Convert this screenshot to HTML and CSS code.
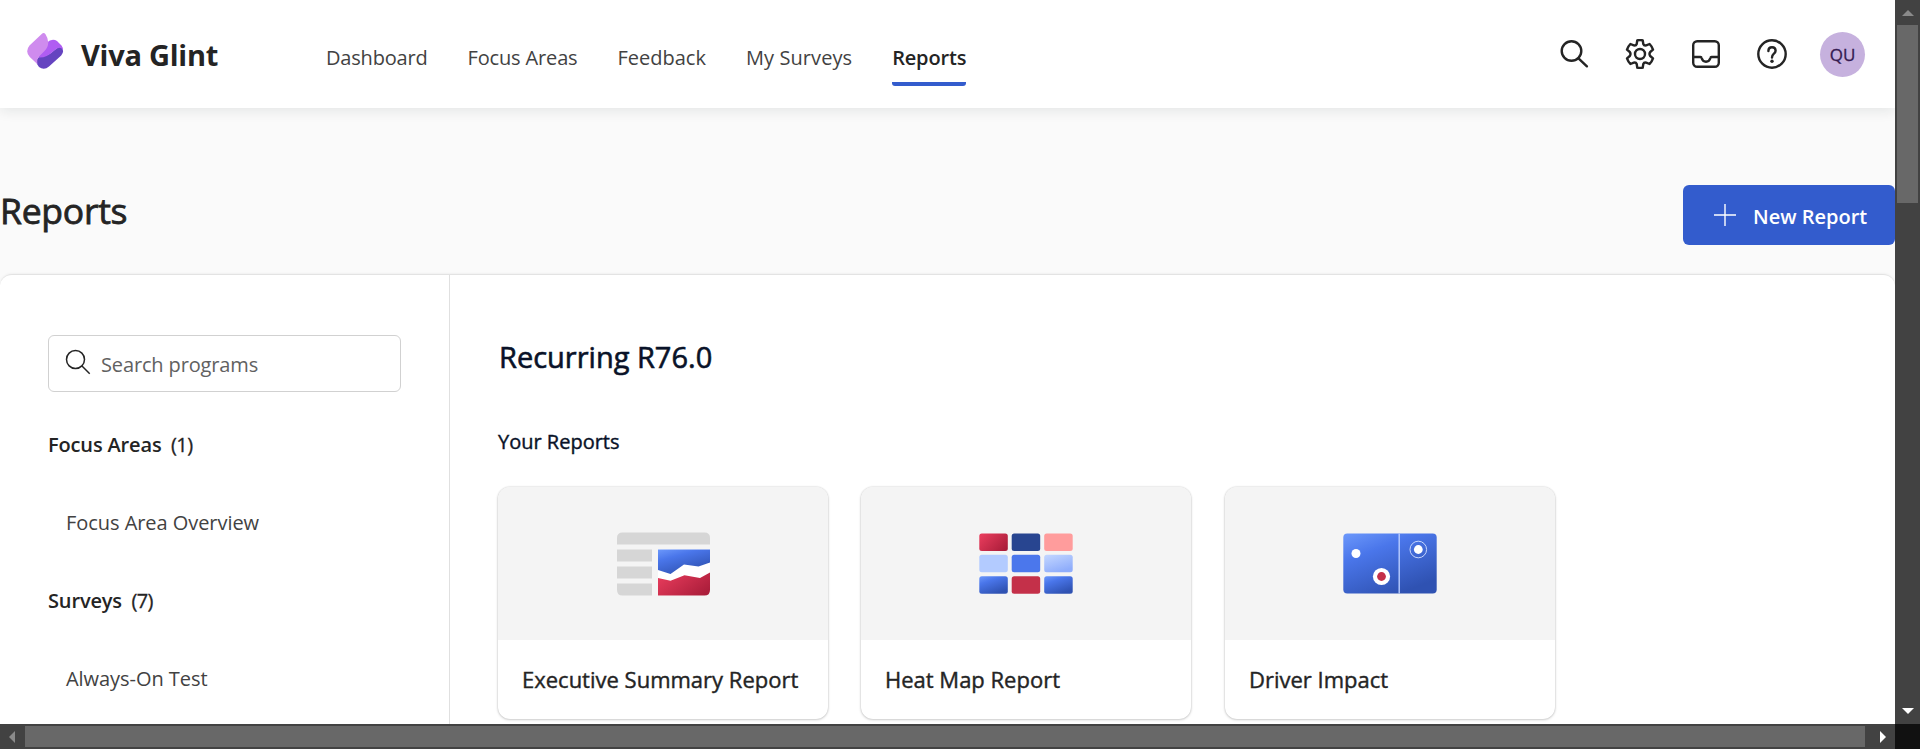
FILE: index.html
```html
<!DOCTYPE html>
<html lang="en">
<head>
<meta charset="utf-8">
<title>Viva Glint - Reports</title>
<link rel="stylesheet" href="styles.css">
</head>
<body>
<div class="window">
  <div class="page">
    <header class="topbar">
      <svg class="logo" width="38" height="38" viewBox="0 0 38 38">
        <path d="M13.500 24.500 Q22 24.500 28 18.500 Q33 14 35.500 15.300 Q38.800 19.500 35.200 23.500 L23 34.500 Q18 38.800 13 35 Q8.500 30 12 26Z" fill="#6544c0"/>
        <path d="M12 25.500 L20.500 11 Q26 5.500 31 9 L35.500 13.500 Q37 15.500 36.800 17.500 Q33.500 13.500 28 18.800 Q20 26.500 12 25.500Z" fill="#b05df2"/>
        <path d="M15.700 2 Q17.700 .1 19.500 2.200 Q25.500 11.500 18.500 19 L13 24.500 Q10.500 27 11.500 32.300 L3.800 25 Q-1.300 19.500 3.500 13.500Z" fill="#cf8bee"/>
      </svg>
      <span class="brand">Viva Glint</span>
      <nav class="nav">
        <a class="nav-link t-dash">Dashboard</a>
        <a class="nav-link t-focus">Focus Areas</a>
        <a class="nav-link">Feedback</a>
        <a class="nav-link t-my">My Surveys</a>
        <a class="nav-link active">Reports</a>
      </nav>
      <div class="tools">
        <svg width="30" height="30" viewBox="0 0 30 30" class="icon"><circle cx="12.500" cy="12" r="9.800"/><path d="M19.500 19.300 27.900 27.300"/></svg>
        <svg width="30" height="30" viewBox="0 0 30 30" class="icon"><circle cx="15" cy="15" r="5"/><path d="M12.300 1.300 Q15 .7 17.700 1.300 L18.300 5 Q19 6.900 21.200 6.400 L24.600 5 Q26.900 7.300 28 10.600 L25.200 13 Q23.800 15 25.200 17 L28 19.400 Q26.900 22.700 24.600 25 L21.200 23.600 Q19 23.100 18.300 25 L17.700 28.700 Q15 29.300 12.300 28.700 L11.700 25 Q11 23.100 8.800 23.600 L5.400 25 Q3.100 22.700 2 19.400 L4.800 17 Q6.200 15 4.800 13 L2 10.600 Q3.100 7.300 5.400 5 L8.800 6.400 Q11 6.900 11.700 5Z"/></svg>
        <svg width="30" height="30" viewBox="0 0 30 30" class="icon"><rect x="2.200" y="2.200" width="25.600" height="25.600" rx="4"/><path d="M2.200 18 H9.500 Q10.400 18 10.600 19 Q11.600 22.700 15 22.700 Q18.400 22.700 19.400 19 Q19.600 18 20.500 18 H27.800"/></svg>
        <svg width="30" height="30" viewBox="0 0 30 30" class="icon"><circle cx="15" cy="15" r="13.700"/><path d="M11.400 12 Q11.400 8.200 15 8.200 Q18.600 8.200 18.600 11.700 Q18.600 13.400 16.700 14.900 Q15 16.400 15 18.600"/><circle cx="15" cy="22.300" r="1.700" class="dot"/></svg>
        <span class="avatar">QU</span>
      </div>
    </header>
    <div class="titlebar">
      <h1 class="title">Reports</h1>
      <button class="new-report">
        <svg width="24" height="24" viewBox="0 0 24 24"><path d="M12 1V23M1 12H23" stroke="#fff" stroke-width="1.400"/></svg>
        <span class="new-label">New Report</span>
      </button>
    </div>
    <main class="panel">
      <aside class="sidebar">
        <div class="search">
          <svg width="26" height="26" viewBox="0 0 26 26"><circle cx="10.500" cy="10.500" r="9" /><path d="M17 17 24.700 24.700"/></svg>
          <span class="placeholder">Search programs</span>
        </div>
        <div class="group"><span class="group-name">Focus Areas</span><span class="count">(1)</span></div>
        <div class="item">Focus Area Overview</div>
        <div class="group"><span class="group-name">Surveys</span><span class="count">(7)</span></div>
        <div class="item">Always-On Test</div>
      </aside>
      <section class="content">
        <h2 class="program">Recurring R76.0</h2>
        <h3 class="subhead">Your Reports</h3>
        <div class="cards">
          <article class="card">
            <div class="thumb">
              <svg width="94" height="64" viewBox="0 0 94 64">
                <defs>
                  <linearGradient id="blue" x1="0" y1="0" x2=".6" y2="1"><stop offset="0" stop-color="#6c98fb"/><stop offset=".35" stop-color="#4a76ea"/><stop offset="1" stop-color="#2f52b2"/></linearGradient>
                  <linearGradient id="red" x1="0" y1=".2" x2="1" y2=".8"><stop offset="0" stop-color="#e63b5b"/><stop offset="1" stop-color="#aa1d3a"/></linearGradient>
                  <linearGradient id="pale" x1="0" y1="0" x2=".5" y2="1"><stop offset="0" stop-color="#c4d7ff"/><stop offset="1" stop-color="#8fadfb"/></linearGradient>
                </defs>
                <g fill="#d6d6d6"><path d="M1 12.500V6Q1 .500 6.500 .500H88.500Q94 .500 94 6V12.500Z"/><path d="M1 17.500H36V29.500H1ZM1 34.500H36V46.500H1ZM1 51.500H36V63.500H6.500Q1 63.500 1 58Z"/></g>
                <path d="M42 17.500H94V58Q94 63.500 88.500 63.500H42Z" fill="#fff"/>
                <path d="M42 17.500H94V30.500L82.500 34.500 68 32.500 54.500 42 42 38Z" fill="url(#blue)"/>
                <path d="M42 46 54.500 48.800 68.500 43.300 84 46 94 40.500V58Q94 63.500 88.500 63.500H42Z" fill="url(#red)"/>
              </svg>
            </div>
            <div class="card-title">Executive Summary Report</div>
          </article>
          <article class="card">
            <div class="thumb">
              <svg width="94" height="61" viewBox="0 0 94 61">
                <rect x=".3" y=".5" width="28.500" height="17.500" rx="2.500" fill="url(#red)"/><rect x="32.700" y=".5" width="28.500" height="17.500" rx="2.500" fill="#284590"/><rect x="65.200" y=".5" width="28.500" height="17.500" rx="2.500" fill="#ff9c9c"/>
                <rect x=".3" y="21.800" width="28.500" height="17.500" rx="2.500" fill="#b3cbff"/><rect x="32.700" y="21.800" width="28.500" height="17.500" rx="2.500" fill="#4b77ec"/><rect x="65.200" y="21.800" width="28.500" height="17.500" rx="2.500" fill="url(#pale)"/>
                <rect x=".3" y="43.200" width="28.500" height="17.500" rx="2.500" fill="url(#blue)"/><rect x="32.700" y="43.200" width="28.500" height="17.500" rx="2.500" fill="#c43049"/><rect x="65.200" y="43.200" width="28.500" height="17.500" rx="2.500" fill="url(#blue)"/>
              </svg>
            </div>
            <div class="card-title">Heat Map Report</div>
          </article>
          <article class="card">
            <div class="thumb">
              <svg width="94" height="61" viewBox="0 0 94 61">
                <rect x=".3" y=".5" width="93.400" height="60" rx="4" fill="url(#blue)"/>
                <path d="M56.200.500V60.500" stroke="#b9cdff" stroke-width="1.400"/>
                <circle cx="13" cy="20.500" r="4.500" fill="#fff"/>
                <circle cx="38.500" cy="43.500" r="8.600" fill="#fff"/><circle cx="38.500" cy="43.500" r="4.400" fill="#c43049"/>
                <circle cx="75.300" cy="16.500" r="8.300" fill="none" stroke="#d5e1ff" stroke-width=".9"/><circle cx="75.300" cy="16.500" r="4.400" fill="#fff"/>
              </svg>
            </div>
            <div class="card-title">Driver Impact</div>
          </article>
        </div>
      </section>
    </main>
  </div>
  <div class="vbar"><i class="up"></i><div class="vthumb"></div><i class="down"></i></div>
  <div class="hbar"><i class="left"></i><div class="hthumb"></div><i class="right"></i></div>
  <div class="corner"></div>
</div>
</body>
</html>
```
FILE: styles.css
```css
* { box-sizing: border-box; }
body { margin: 0; font-family: "Open Sans", "Noto Sans", sans-serif; font-size: 20px; color: #242424; }
.window { display: grid; grid-template-columns: 1895px 25px; grid-template-rows: 724px 25px; height: 749px; overflow: hidden; }
.page { background: #fafafa; overflow: hidden; display: flex; flex-direction: column; white-space: nowrap; }

.topbar { height: 108px; flex: none; background: #fff; display: flex; align-items: center; padding: 0 30px 0 26px; box-shadow: 0 3px 12px rgba(0, 30, 30, .09); }
.logo { margin-bottom: 6px; flex: none; }
.brand { font-size: 29px; font-weight: 700; line-height: 40px; letter-spacing: -.25px; margin: 1px 0 0 17px; width: 245px; }
.nav { display: flex; height: 60px; margin-top: 8px; }
.nav-link { color: #424242; line-height: 59px; height: 60px; margin-right: 40px; }
.nav-link.active { height: 58px; color: #242424; font-weight: 600; letter-spacing: -.17px; border-bottom: 4px solid #335ccd; border-radius: 0 0 3px 3px; }
.t-dash { letter-spacing: -.19px; }
.t-focus { letter-spacing: -.15px; }
.t-my { letter-spacing: .08px; }
.tools { margin-left: auto; display: flex; align-items: center; gap: 36px; }
.icon { fill: none; stroke: #242424; stroke-width: 2.400; stroke-linecap: round; stroke-linejoin: round; flex: none; }
.icon .dot { fill: #242424; stroke: none; }
.avatar { width: 45px; height: 45px; border-radius: 50%; background: #c6b1de; color: #341a51; font-size: 17px; line-height: 45px; text-align: center; margin-left: -3px; -webkit-text-stroke: .3px; }

.titlebar { height: 166px; flex: none; display: flex; justify-content: space-between; padding-top: 77px; }
.title { margin: 0; font-size: 35.500px; font-weight: 400; line-height: 50px; letter-spacing: -.25px; -webkit-text-stroke: .8px; }
.new-report { width: 212px; height: 60px; border: 0; border-radius: 6px; background: #335ccd; color: #fff; display: flex; align-items: center; padding: 0 0 0 30px; gap: 16px; font: 600 20px/60px "Open Sans", sans-serif; }
.new-label { padding-top: 3px; line-height: 57px; }

.panel { height: 620px; flex: none; background: #fff; border: 1px solid #e3e3e3; border-width: 1px 0; border-radius: 12px; box-shadow: 0 0 3px rgba(0, 0, 0, .08); display: flex; }
.sidebar { width: 450px; padding: 60px 48px 0; border-right: 1px solid #e0e0e0; }
.search { height: 57px; width: 353px; border: 1px solid #d1d1d1; border-radius: 6px; display: flex; align-items: center; padding-left: 16px; gap: 10px; color: #616161; margin-bottom: 14px; }
.search svg { fill: none; stroke: #242424; stroke-width: 1.500; margin-bottom: 3px; }
.placeholder { letter-spacing: -.14px; padding-top: 2px; }
.group, .item { height: 78px; line-height: 78px; }
.group-name { font-weight: 600; letter-spacing: -.15px; margin-right: 9.500px; }
.count { letter-spacing: -.6px; -webkit-text-stroke: .3px; }
.item { padding-left: 18px; color: #424242; letter-spacing: -.05px; }
.content { padding: 60px 0 0 48px; }
.program { margin: 0 0 0 1px; font-size: 29px; font-weight: 400; line-height: 44px; color: #091228; -webkit-text-stroke: .6px; }
.subhead { margin: 43px 0 25px; font-size: 20px; font-weight: 400; line-height: 40px; color: #091228; -webkit-text-stroke: .4px; }
.cards { display: flex; gap: 33px; }
.card { width: 330px; height: 232px; border-radius: 12px; background: #fff; box-shadow: 0 0 2px rgba(0, 0, 0, .2), 0 1px 3px rgba(0, 0, 0, .16); overflow: hidden; }
.card:last-child { margin-left: 1px; }
.thumb { height: 153px; background: #f4f4f4; display: flex; align-items: center; justify-content: center; }
.card-title { font-size: 22px; line-height: 78px; padding-left: 24px; -webkit-text-stroke: .4px; }

.vbar { background: #424242; display: flex; flex-direction: column; align-items: center; padding: 10px 2px; }
.vthumb { width: 21px; height: 178px; background: #686868; margin: 9px 0 auto; }
.hbar { background: #424242; display: flex; align-items: center; padding: 0 9px; }
.hthumb { width: 1840px; height: 21px; background: #686868; margin-left: 10px; }
.corner { background: #111; }
.up { border: 6px solid transparent; border-top: 0; border-bottom-color: #8a8a8a; }
.down { border: 6px solid transparent; border-bottom: 0; border-top-color: #fff; }
.left { border: 6px solid transparent; border-left: 0; border-right-color: #8a8a8a; }
.right { border: 6px solid transparent; border-right: 0; border-left-color: #fff; margin-left: auto; }
```
